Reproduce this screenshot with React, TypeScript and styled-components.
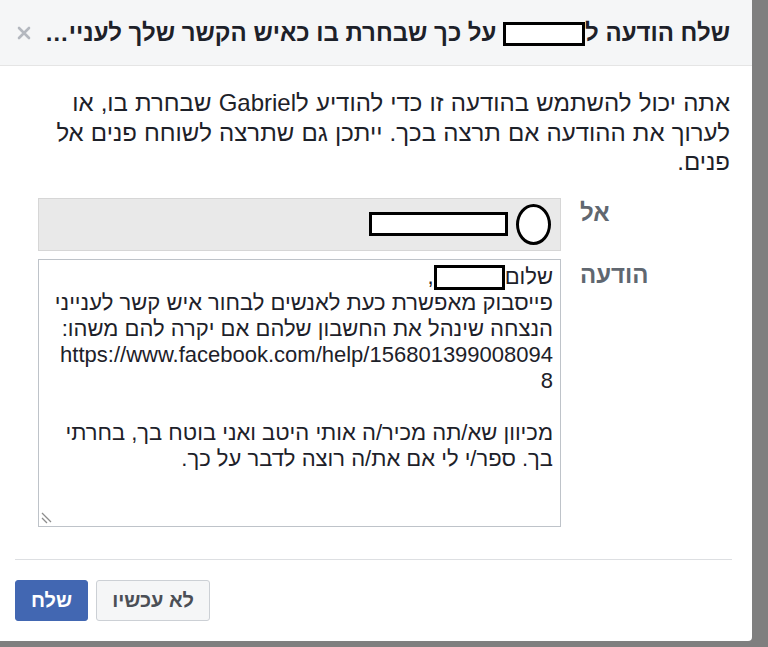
import React from 'react';
import styled, { createGlobalStyle } from 'styled-components';

const GlobalStyle = createGlobalStyle`
  html, body {
    margin: 0;
    padding: 0;
    background: #7f7f7f;
  }
  body {
    font-family: "Liberation Sans", "DejaVu Sans", Arial, sans-serif;
  }
`;

const Dialog = styled.div`
  direction: rtl;
  width: 752px;
  background: #fff;
  border-bottom-right-radius: 4px;
  display: flex;
  flex-direction: column;
`;

const Header = styled.div`
  height: 65px;
  display: flex;
  align-items: center;
  gap: 8px;
  padding: 0 22px 0 15px;
  background: #f5f6f7;
  border-bottom: 1px solid #e5e5e5;
`;

const Title = styled.h2`
  flex: 1;
  min-width: 0;
  margin: 0;
  font-size: 24px;
  font-weight: bold;
  color: #1d2129;
  white-space: nowrap;
  overflow: hidden;
  text-overflow: ellipsis;
`;

const CloseButton = styled.button`
  flex: none;
  width: 18px;
  height: 18px;
  padding: 0;
  border: 0;
  background: none;
  display: flex;
  align-items: center;
  justify-content: center;
  cursor: pointer;
`;

const Redacted = styled.span<{ $w: number; $h: number }>`
  display: inline-block;
  box-sizing: border-box;
  width: ${(p) => p.$w}px;
  height: ${(p) => p.$h}px;
  border: 3px solid #000;
  background: #fff;
  vertical-align: middle;
`;

const Body = styled.div`
  padding: 22px 22px 32px 38px;
`;

const Intro = styled.p`
  margin: 0 0 21px;
  font-size: 24px;
  line-height: 29.5px;
  word-spacing: 0.5px;
  color: #1d2129;
`;

const Form = styled.div`
  display: grid;
  grid-template-columns: 1fr 523px;
  column-gap: 17px;
  row-gap: 8px;
`;

const Label = styled.label<{ $top?: number }>`
  text-align: left;
  padding: ${(p) => p.$top ?? 0}px 0 0 2px;
  font-size: 24px;
  line-height: 29px;
  font-weight: bold;
  color: #606770;
`;

const ToField = styled.div`
  box-sizing: border-box;
  height: 53px;
  display: flex;
  align-items: center;
  gap: 8px;
  padding: 0 9px;
  background: #e9e9e9;
  border: 1px solid #d6d6d6;
`;

const Avatar = styled.span`
  box-sizing: border-box;
  width: 35px;
  height: 41px;
  border: 3px solid #000;
  border-radius: 50%;
  background: #fff;
`;

const Message = styled.div`
  position: relative;
  box-sizing: border-box;
  height: 268px;
  padding: 4px 7px;
  border: 1px solid #bec3c9;
  font-size: 22px;
  line-height: 26px;
  color: #1d2129;
`;

const Line = styled.div`
  white-space: nowrap;
  min-height: 26px;
`;

const Grip = styled.svg`
  position: absolute;
  left: 2px;
  bottom: 2px;
`;

const Footer = styled.div`
  margin: 0 20px 0 15px;
  padding: 20px 0;
  border-top: 1px solid #dddfe2;
  display: flex;
  justify-content: flex-end;
  gap: 8px;
`;

const Button = styled.button<{ $primary?: boolean }>`
  height: 41px;
  padding: 0 15px;
  border-radius: 3px;
  font-family: inherit;
  font-size: 20px;
  font-weight: bold;
  cursor: pointer;
  border: 1px solid ${(p) => (p.$primary ? '#4267b2' : '#ccd0d5')};
  background: ${(p) => (p.$primary ? '#4267b2' : '#f5f6f7')};
  color: ${(p) => (p.$primary ? '#fff' : '#4b4f56')};
`;

export default function App() {
  return (
    <>
      <GlobalStyle />
      <Dialog>
        <Header>
          <Title>
            שלח הודעה ל<Redacted $w={82} $h={24} /> על כך שבחרת בו כאיש הקשר שלך לענייני הנצחה
          </Title>
          <CloseButton aria-label="סגור">
            <svg width="14" height="14" viewBox="0 0 14 14">
              <path d="M2 2 L12 12 M12 2 L2 12" stroke="#b4b8bf" strokeWidth="2.6" strokeLinecap="round" />
            </svg>
          </CloseButton>
        </Header>

        <Body>
          <Intro>
            אתה יכול להשתמש בהודעה זו כדי להודיע ל‎Gabriel‎ שבחרת בו, או לערוך את ההודעה אם תרצה
            בכך. ייתכן גם שתרצה לשוחח פנים אל פנים.
          </Intro>

          <Form>
            <Label>אל</Label>
            <ToField>
              <Avatar />
              <Redacted $w={139} $h={24} />
            </ToField>

            <Label $top={1}>הודעה</Label>
            <Message>
              <Line>
                שלום<Redacted $w={71} $h={25} />,
              </Line>
              <Line>פייסבוק מאפשרת כעת לאנשים לבחור איש קשר לענייני</Line>
              <Line>הנצחה שינהל את החשבון שלהם אם יקרה להם משהו:</Line>
              <Line>https://www.facebook.com/help/156801399008094</Line>
              <Line>8</Line>
              <Line />
              <Line>מכיוון שא/תה מכיר/ה אותי היטב ואני בוטח בך, בחרתי</Line>
              <Line>בך. ספר/י לי אם את/ה רוצה לדבר על כך.</Line>
              <Grip width="14" height="14" viewBox="0 0 14 14">
                <path d="M1 3 L10 12 M1 8 L6 13" stroke="#8d8d8d" strokeWidth="1.3" />
              </Grip>
            </Message>
          </Form>
        </Body>

        <Footer>
          <Button>לא עכשיו</Button>
          <Button $primary>שלח</Button>
        </Footer>
      </Dialog>
    </>
  );
}
